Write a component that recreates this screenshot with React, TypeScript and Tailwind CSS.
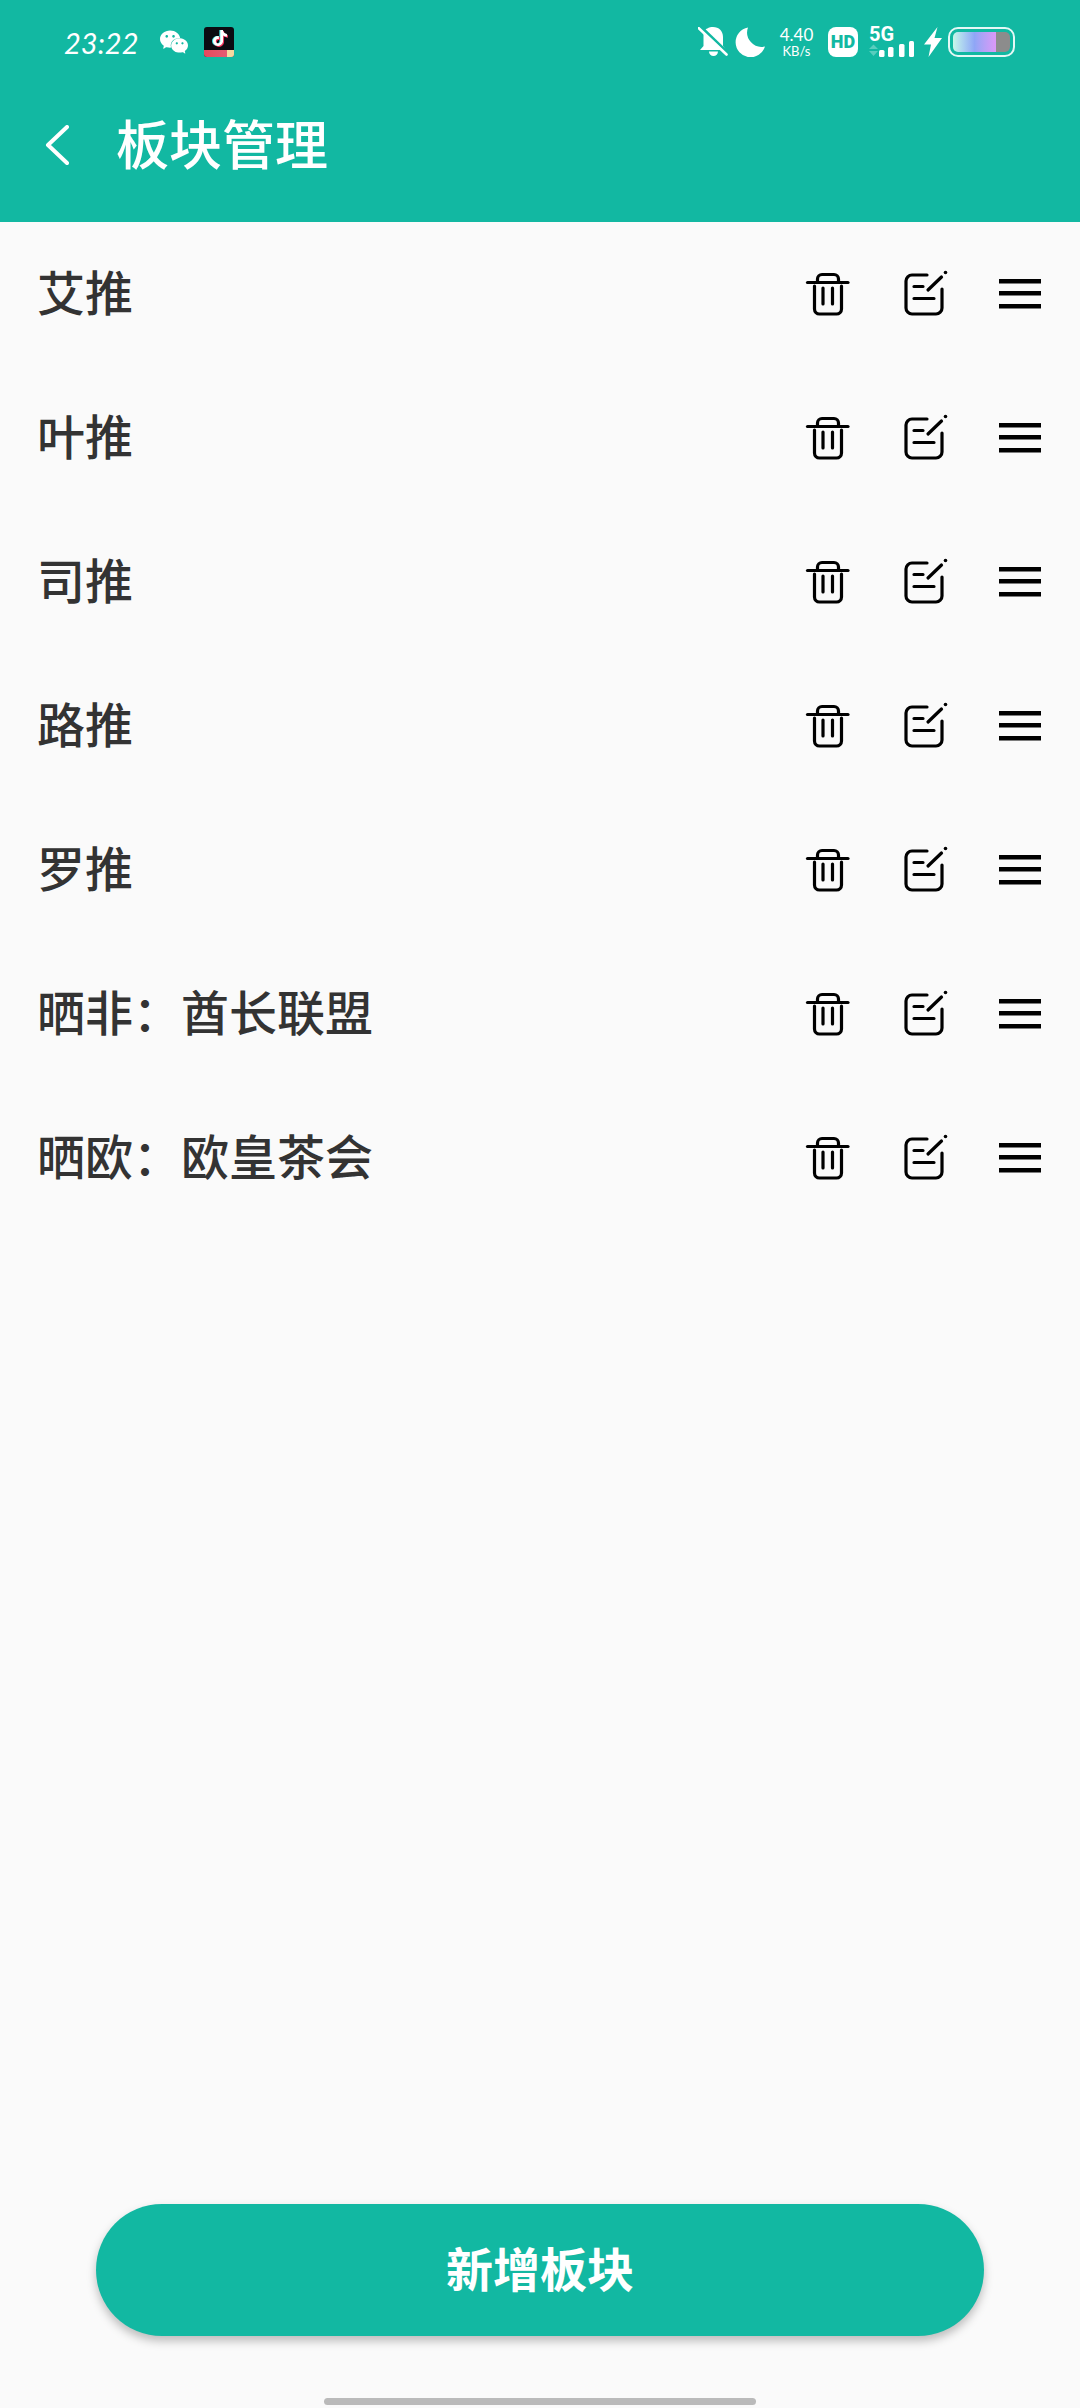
import { SiTiktok, SiWechat } from 'react-icons/si';

const boards = ['艾推', '叶推', '司推', '路推', '罗推', '晒非：酋长联盟', '晒欧：欧皇茶会'];

function TrashIcon() {
  return (
    <svg viewBox="0 0 48 48" className="w-[48px] h-[48px]" fill="none" stroke="#000" strokeWidth="3.2" strokeLinecap="round">
      <path d="M3.5 12.5H44" />
      <path d="M13.5 12V9a4.5 4.5 0 0 1 4.5-4.5h12a4.5 4.5 0 0 1 4.5 4.5v3" />
      <path d="M10.5 16v23a5 5 0 0 0 5 5h17a5 5 0 0 0 5-5V16" />
      <path d="M19 18v16M28.5 18v16" />
    </svg>
  );
}

function EditIcon() {
  return (
    <svg viewBox="0 0 48 48" className="w-[48px] h-[48px]" fill="none" stroke="#000" strokeWidth="3.2" strokeLinecap="round">
      <path d="M25 5H10a6 6 0 0 0-6 6v27a6 6 0 0 0 6 6h24a6 6 0 0 0 6-6V19" />
      <path d="M12 16.5h9M12 28.5h20" />
      <path d="M26 20L39.5 7" />
      <circle cx="43.5" cy="2.5" r="1.8" fill="#000" stroke="none" />
    </svg>
  );
}

function MenuIcon() {
  return (
    <svg viewBox="0 0 48 48" className="w-[48px] h-[48px]" fill="#000">
      <rect x="3" y="9" width="42" height="4.5" />
      <rect x="3" y="21" width="42" height="4.5" />
      <rect x="3" y="34" width="42" height="4.5" />
    </svg>
  );
}

function TiktokBadge() {
  return (
    <div className="relative ml-[16px] flex h-[30px] w-[30px] flex-col overflow-hidden rounded-[3px] bg-[#0b0b12]">
      <div className="relative flex-1">
        <SiTiktok className="absolute left-[7px] top-[2.5px] h-[16px] w-[16px] text-[#3fe0e6]" />
        <SiTiktok className="absolute left-[8.5px] top-[3.5px] h-[16px] w-[16px] text-[#f0305a]" />
        <SiTiktok className="absolute left-[8px] top-[3px] h-[16px] w-[16px] text-white" />
      </div>
      <div className="flex h-[7px] bg-gradient-to-r from-[#e8485c] to-[#e2607a]">
        <div className="ml-auto h-full w-[7px] bg-[#f5d9a0]" />
      </div>
    </div>
  );
}

function BellOffIcon() {
  return (
    <svg viewBox="0 0 30 30" className="h-[30px] w-[30px]">
      <path d="M5.5 5C7 2 11 0 15 0c6 0 10 4 10 10v9l3 4H2l3.5-4z" fill="#fff" />
      <path d="M11 24.5h9a4.5 4.5 0 0 1-9 0z" fill="#fff" />
      <path d="M3 0l26 25" stroke="#12b8a2" strokeWidth="3" />
      <path d="M0.5 1l28 26.5" stroke="#fff" strokeWidth="2.6" strokeLinecap="round" />
    </svg>
  );
}

function MoonIcon() {
  return (
    <svg viewBox="0 0 30 30" className="ml-[7px] h-[30px] w-[30px]" fill="#fff">
      <path d="M13 .5A15 15 0 1 0 30 19.5 14.5 14.5 0 0 1 13 .5z" />
    </svg>
  );
}

function SignalIcon() {
  return (
    <svg viewBox="0 0 46 16" className="h-[16px] w-[46px]">
      <path d="M1 8l4.5-4.5L10 8z" fill="#fff" opacity="0.3" />
      <path d="M1 10h9l-4.5 5z" fill="#fff" opacity="0.3" />
      <rect x="11" y="9" width="5.5" height="7" rx="1.5" fill="#fff" />
      <rect x="20" y="6" width="5.5" height="10" rx="1.5" fill="#fff" />
      <rect x="31" y="3" width="5.5" height="13" rx="1.5" fill="#fff" />
      <rect x="41" y="0" width="5" height="16" rx="1.5" fill="#fff" />
    </svg>
  );
}

function BoltIcon() {
  return (
    <svg viewBox="0 0 18 30" className="ml-[10px] h-[30px] w-[18px]" fill="#fff">
      <path d="M13.5 0L0 17.5h7L4.5 30 18 11h-7.5z" />
    </svg>
  );
}

function Battery() {
  return (
    <div className="ml-[6px] flex h-[30px] w-[67px] rounded-[10px] border-[2px] border-[#e4f8f5] p-[3px]">
      <div className="flex flex-1 overflow-hidden rounded-[5px]">
        <div className="w-[43px] bg-gradient-to-r from-[#c8f7e8] via-[#8fa6f6] to-[#db98f8]" />
        <div className="flex-1 bg-[#8c8c8c]" />
      </div>
    </div>
  );
}

function StatusBar() {
  return (
    <div className="flex h-[84px] items-center text-white">
      <div className="flex items-center pl-[64px]">
        <span className="w-[73px] text-[29px] italic leading-none font-['Lato',sans-serif]">23:22</span>
        <SiWechat className="ml-[23px] h-[28px] w-[28px]" />
        <TiktokBadge />
      </div>
      <div className="ml-auto flex items-center pr-[65px]">
        <BellOffIcon />
        <MoonIcon />
        <div className="ml-[16px] flex w-[31px] flex-col items-center font-['Lato',sans-serif]">
          <span className="text-[17px] leading-[17px]">4.40</span>
          <span className="mt-[2px] text-[13px] leading-[13px]">KB/s</span>
        </div>
        <div className="ml-[16px] flex h-[30px] w-[30px] items-center justify-center rounded-[8px] bg-white text-[18px] font-black leading-none text-[#12b8a2] font-['Roboto',sans-serif]">
          HD
        </div>
        <div className="ml-[10px] flex h-[30px] w-[46px] flex-col">
          <span className="h-[14px] pl-[1px] text-[20px] font-bold leading-[14px] font-['Roboto',sans-serif]">5G</span>
          <SignalIcon />
        </div>
        <BoltIcon />
        <Battery />
      </div>
    </div>
  );
}

export default function App() {
  return (
    <div className="flex h-[2408px] w-[1080px] flex-col overflow-hidden bg-[#fafafa] font-['Noto_Sans_CJK_SC',sans-serif]">
      <header className="h-[222px] bg-[#12b8a2]">
        <StatusBar />
        <div className="flex h-[122px] items-center pl-[45px]">
          <svg viewBox="0 0 24 40" className="h-[40px] w-[24px]" fill="none" stroke="#fff" strokeWidth="4" strokeLinecap="round" strokeLinejoin="round">
            <path d="M22 2L3 20l19 18" />
          </svg>
          <h1 className="ml-[47px] pb-[6px] text-[53px] font-medium leading-none text-white">板块管理</h1>
        </div>
      </header>

      <ul>
        {boards.map((name) => (
          <li key={name} className="flex h-[144px] items-center pl-[37px] pr-[36px]">
            <span className="flex-1 pb-[8px] text-[48px] font-medium leading-none text-[#333333]">{name}</span>
            <TrashIcon />
            <div className="ml-[50px]">
              <EditIcon />
            </div>
            <div className="ml-[46px]">
              <MenuIcon />
            </div>
          </li>
        ))}
      </ul>

      <button className="mx-[96px] mt-auto flex h-[132px] items-center justify-center rounded-full bg-[#12b8a2] pb-[8px] text-[47px] font-bold leading-none text-white shadow-[0_5px_10px_rgba(0,0,0,0.25)]">
        新增板块
      </button>
      <div className="mx-[324px] mb-[3px] mt-[62px] h-[7px] rounded-full bg-[#bababa]" />
    </div>
  );
}
